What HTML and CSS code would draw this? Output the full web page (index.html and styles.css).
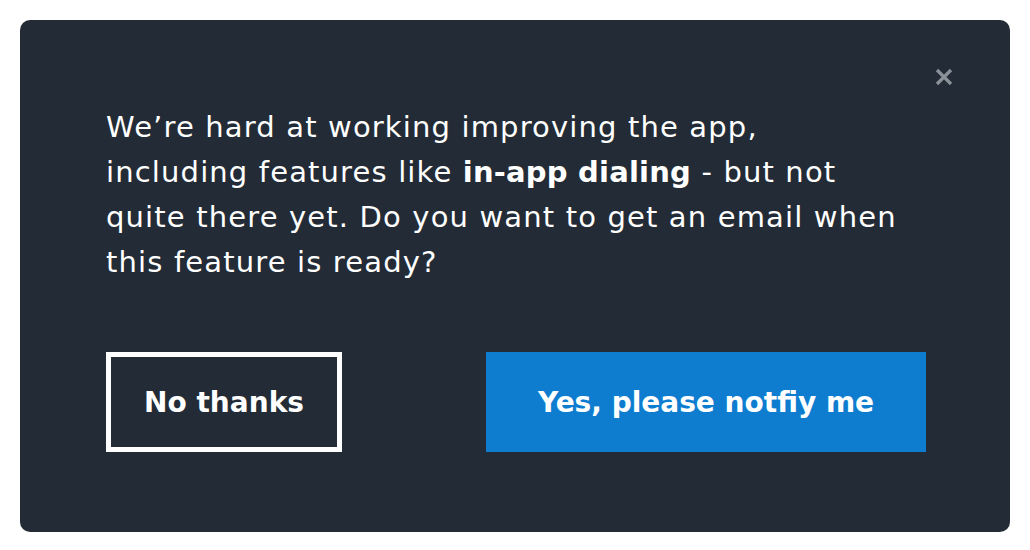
FILE: index.html
```html
<!DOCTYPE html>
<html lang="en">
<head>
    <meta charset="UTF-8">
    <meta name="viewport" content="width=device-width, initial-scale=1.0">
    <title>Feature coming soon</title>
    <link rel="stylesheet" href="styles.css">
</head>
<body>
    <div class="modal">
        <button class="close" aria-label="Close">
            <svg width="20" height="20" viewBox="0 0 20 20">
                <path d="M3 3 L17 17 M17 3 L3 17" stroke="#8a9199" stroke-width="3.2" stroke-linecap="butt"/>
            </svg>
        </button>

        <p class="message">
            We’re hard at working improving the app,<br>
            including features like <strong>in-app dialing</strong> - but not<br>
            quite there yet. Do you want to get an email when<br>
            this feature is ready?
        </p>

        <div class="actions">
            <button class="btn btn-outline">No thanks</button>
            <button class="btn btn-primary">Yes, please notfiy me</button>
        </div>
    </div>
</body>
</html>
```

FILE: styles.css
```css
body {
    margin: 0;
    padding: 20px;
    background-color: #ffffff;
    font-family: "DejaVu Sans", "Open Sans", sans-serif;
}
.modal {
    position: relative;
    background-color: #232c36;
    border-radius: 10px;
    height: 512px;
    box-sizing: border-box;
    padding: 85px 84px 80px 86px;
    display: flex;
    flex-direction: column;
}
.close {
    position: absolute;
    top: 47px;
    right: 56px;
    background: none;
    border: none;
    padding: 0;
    cursor: pointer;
    line-height: 0;
}
.message {
    margin: 0;
    color: #ffffff;
    font-size: 29px;
    line-height: 45px;
    letter-spacing: 1.15px;
    white-space: nowrap;
}
.message strong {
    font-weight: bold;
    letter-spacing: 0.2px;
}
.actions {
    margin-top: auto;
    display: flex;
    justify-content: space-between;
}
.btn {
    height: 100px;
    font-family: inherit;
    font-size: 28px;
    font-weight: bold;
    color: #ffffff;
    cursor: pointer;
    box-sizing: border-box;
}
.btn-outline {
    width: 236px;
    background-color: transparent;
    border: 5px solid #ffffff;
}
.btn-primary {
    width: 440px;
    background-color: #0e7dd0;
    border: none;
}
```
